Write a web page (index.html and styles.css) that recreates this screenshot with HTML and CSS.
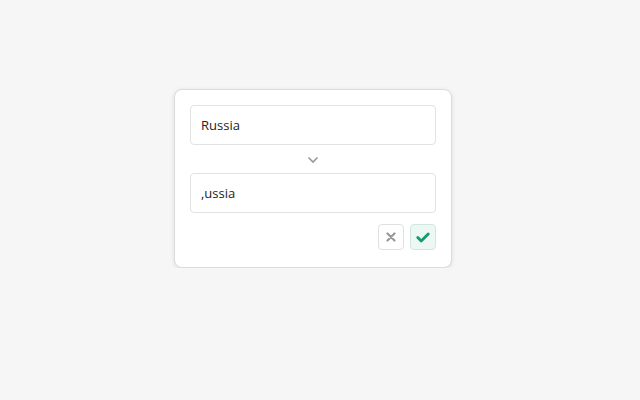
FILE: index.html
```html
<!DOCTYPE html>
<html>
<head>
<meta charset="utf-8">
<link rel="stylesheet" href="styles.css">
</head>
<body>
<div class="card">
  <div class="field">Russia</div>
  <div class="arrow">
    <svg width="12" height="8" viewBox="0 0 12 8"><path d="M1.5 1.5 L6 6 L10.5 1.5" fill="none" stroke="#999" stroke-width="1.6"/></svg>
  </div>
  <div class="field">,ussia</div>
  <div class="actions">
    <button class="btn cancel">
      <svg width="10" height="10" viewBox="0 0 10 10"><path d="M1.5 1.5 L8.5 8.5 M8.5 1.5 L1.5 8.5" stroke="#9a9a9a" stroke-width="2.2" stroke-linecap="round"/></svg>
    </button>
    <button class="btn ok">
      <svg width="14" height="11" viewBox="0 0 14 11"><path d="M1.8 5.6 L5.2 9 L12.2 2" fill="none" stroke="#139b6e" stroke-width="2.8" stroke-linecap="round" stroke-linejoin="round"/></svg>
    </button>
  </div>
</div>
</body>
</html>
```
FILE: styles.css
```css
html, body {
  margin: 0;
  padding: 0;
  background: #f6f6f6;
  font-family: "Open Sans", "Noto Sans", sans-serif;
}
.card {
  margin: 89px 0 0 174px;
  width: 246px;
  padding: 15px 15px 17px 15px;
  background: #fff;
  border: 1px solid #dcdcdc;
  border-radius: 8px;
  box-shadow: 0 1px 4px rgba(0,0,0,0.10);
}
.field {
  height: 38px;
  border: 1px solid #e2e2e2;
  border-radius: 4px;
  padding: 0 10px;
  display: flex;
  align-items: center;
  font-size: 13px;
  color: #222;
}
.arrow {
  height: 28px;
  display: flex;
  align-items: center;
  justify-content: center;
  padding-top: 2px;
  box-sizing: border-box;
}
.actions {
  margin-top: 11px;
  display: flex;
  justify-content: flex-end;
  gap: 6px;
}
.btn {
  width: 26px;
  height: 26px;
  padding: 0;
  border-radius: 4px;
  display: flex;
  align-items: center;
  justify-content: center;
  cursor: pointer;
}
.cancel {
  background: #fff;
  border: 1px solid #e0e0e0;
}
.ok {
  background: #edf7f3;
  border: 1px solid #cfe8dd;
}
```
